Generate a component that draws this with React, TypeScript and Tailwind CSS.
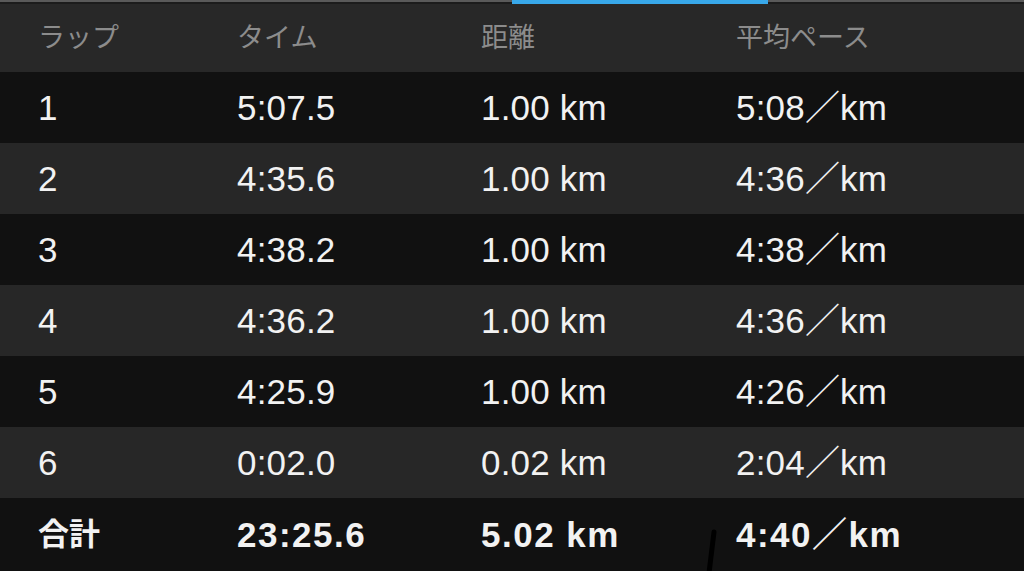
const laps = [
  { lap: '1', time: '5:07.5', dist: '1.00 km', pace: '5:08／km' },
  { lap: '2', time: '4:35.6', dist: '1.00 km', pace: '4:36／km' },
  { lap: '3', time: '4:38.2', dist: '1.00 km', pace: '4:38／km' },
  { lap: '4', time: '4:36.2', dist: '1.00 km', pace: '4:36／km' },
  { lap: '5', time: '4:25.9', dist: '1.00 km', pace: '4:26／km' },
  { lap: '6', time: '0:02.0', dist: '0.02 km', pace: '2:04／km' },
];

const cols = 'grid grid-cols-[199px_244px_255px_1fr] pl-[38px] items-center';

const Row = ({ cells, dark, bold }: { cells: string[]; dark: boolean; bold?: boolean }) => (
  <div
    className={`${cols} text-[35px] text-[#f2f2f2] ${dark ? 'bg-[#111111]' : 'bg-[#272727]'} ${
      bold ? 'font-bold h-[73px] tracking-[1.5px]' : 'h-[71px] tracking-[0.2px]'
    }`}
  >
    {cells.map((c, i) => (
      <span key={i} className={`leading-none ${bold && i === 0 ? 'text-[31px] tracking-normal' : ''}`}>
        {c}
      </span>
    ))}
  </div>
);

export default function App() {
  return (
    <div
      className="relative w-[1024px] h-[571px] overflow-hidden bg-[#111111]"
      style={{ fontFamily: '"Helvetica Neue", "Liberation Sans", "Noto Sans CJK JP", sans-serif' }}
    >
      {/* tab indicator strip */}
      <div className="flex h-[4px]">
        <div className="w-[512px] bg-[#1c1c1c] border-t-2 border-[#5a5a5a]" />
        <div className="w-[256px] bg-[#38a8ea]" />
        <div className="flex-1 bg-[#1c1c1c] border-t-2 border-[#5a5a5a]" />
      </div>

      <div className={`${cols} h-[68px] bg-[#282828] text-[27px] text-[#8c8c8c]`}>
        <span>ラップ</span>
        <span>タイム</span>
        <span>距離</span>
        <span>平均ペース</span>
      </div>

      {laps.map((l, i) => (
        <Row key={l.lap} cells={[l.lap, l.time, l.dist, l.pace]} dark={i % 2 === 0} />
      ))}

      <Row cells={['合計', '23:25.6', '5.02 km', '4:40／km']} dark bold />

      {/* stray pen mark */}
      <svg className="absolute left-[700px] top-[528px]" width="20" height="45" viewBox="0 0 20 45">
        <path d="M14 4 L9 45" stroke="#000" strokeWidth="5" strokeLinecap="round" />
      </svg>
    </div>
  );
}
